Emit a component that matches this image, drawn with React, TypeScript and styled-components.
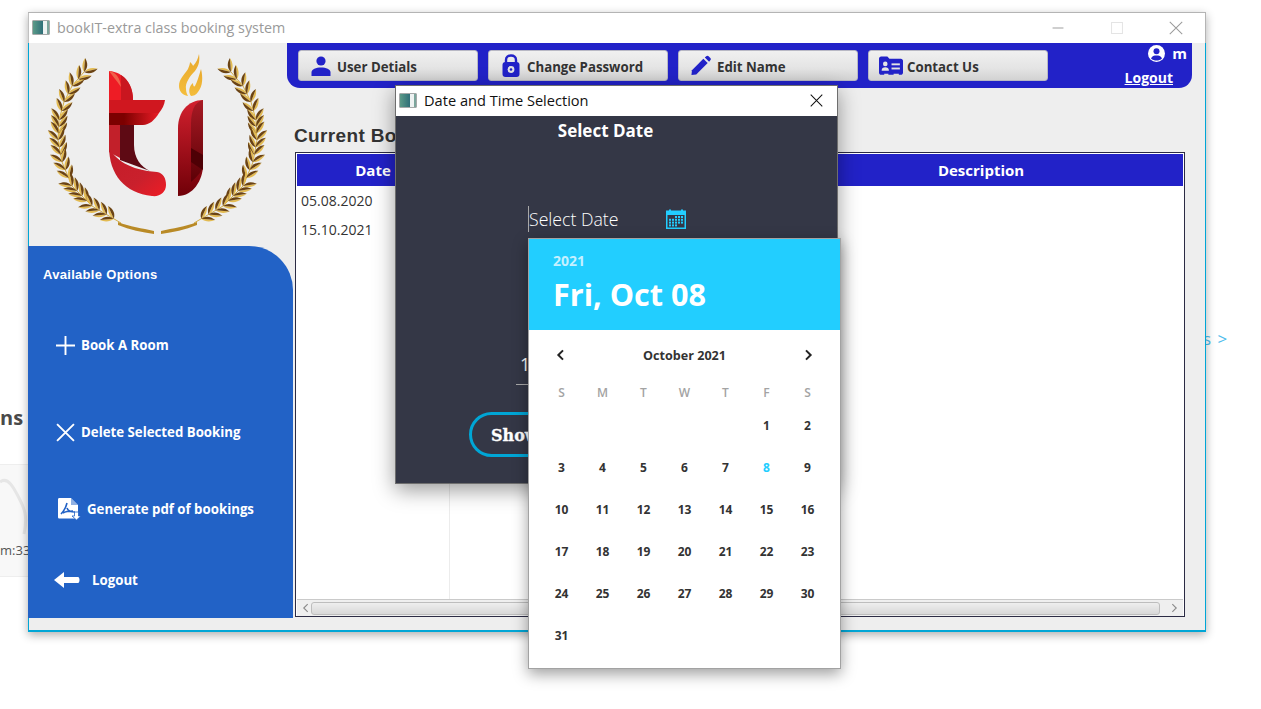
import React from 'react';
import styled, { createGlobalStyle } from 'styled-components';

const UI_FONT = `"Open Sans", "Noto Sans", sans-serif`;

const GlobalStyle = createGlobalStyle`
    html, body {
        margin: 0;
        background: #fff;
        overflow: hidden;
    }
    * {
        box-sizing: border-box;
    }
`;

const Desktop = styled.div`
    position: relative;
    width: 1261px;
    height: 709px;
    overflow: hidden;
    background: #fff;
    font-family: ${UI_FONT};
`;

/* bits of the browser page that is left behind the app window */
const PageHeadingScrap = styled.div`
    position: absolute;
    left: 0;
    top: 403px;
    font-size: 20px;
    font-weight: 700;
    line-height: 30px;
    color: #4a4a4a;
`;

const PageCardScrap = styled.div`
    position: absolute;
    left: -10px;
    top: 464px;
    width: 40px;
    height: 113px;
    background: #f8f8f8;
    border: 1px solid #eeeeee;
    overflow: hidden;
`;

const PageCardText = styled.div`
    position: absolute;
    left: 9px;
    top: 75px;
    font-size: 13px;
    line-height: 20px;
    color: #555;
`;

const PageCardSketch = styled.svg`
    position: absolute;
    left: 9px;
    top: 5px;
`;

const PageLinkScrap = styled.div`
    position: absolute;
    left: 1203px;
    top: 328px;
    font-size: 17px;
    line-height: 22px;
    letter-spacing: 1px;
    color: #4dbcec;
`;

const MainWindow = styled.div`
    position: absolute;
    left: 28px;
    top: 12px;
    width: 1178px;
    height: 620px;
    display: flex;
    flex-direction: column;
    border-top: 1px solid #b4b4b4;
    box-shadow: 0 3px 9px rgba(0, 0, 0, 0.32);
`;

const TitleBar = styled.div`
    height: 30px;
    flex: none;
    display: flex;
    align-items: center;
    background: #fff;
    border-left: 1px solid #c0c0c0;
    border-right: 1px solid #b4b4b4;
    padding-left: 3px;
    padding-bottom: 1px;
`;

const AppIcon = styled.span`
    width: 18px;
    height: 15px;
    flex: none;
    border: 1px solid #a4a8a8;
    border-radius: 1px;
    background: linear-gradient(90deg, #5b9a88 0%, #2f6f78 62%, #eef2f2 62%, #eef2f2 88%, #7ba59c 88%);
`;

const WindowTitle = styled.span<{ $dark?: boolean }>`
    margin-left: 7px;
    font-size: ${(p) => (p.$dark ? 14.6 : 14.3)}px;
    color: ${(p) => (p.$dark ? '#111' : '#9a9a9a')};
    flex: 1;
`;

const WindowControls = styled.div`
    display: flex;
    align-items: center;
`;

const ControlButton = styled.span`
    width: 59px;
    height: 29px;
    display: flex;
    align-items: center;
    justify-content: center;
`;

const DialogClose = styled(ControlButton)`
    width: 42px;
`;

const WindowBody = styled.div`
    flex: 1;
    min-height: 0;
    display: flex;
    background: #eeeeee;
    border: 1px solid #00a6d6;
    border-top: 0;
    border-bottom-width: 2px;
`;

const LeftColumn = styled.div`
    width: 265px;
    flex: none;
    display: flex;
    flex-direction: column;
    margin-left: -1px;
    padding-bottom: 12px;
`;

const LogoWrap = styled.div`
    height: 203px;
    flex: none;
`;

const Sidebar = styled.nav`
    flex: 1;
    background: #2262c6;
    border-top-right-radius: 44px;
    padding-top: 21px;
    color: #fff;
`;

const SidebarTitle = styled.div`
    font-family: "Liberation Sans", Arial, sans-serif;
    font-size: 13px;
    font-weight: 700;
    line-height: 16px;
    letter-spacing: 0.3px;
    margin-left: 15px;
    margin-bottom: 50px;
`;

const SideItem = styled.div<{ $pad: number; $gap: number; $after: number }>`
    height: 24px;
    display: flex;
    align-items: center;
    padding-left: ${(p) => p.$pad}px;
    gap: ${(p) => p.$gap}px;
    margin-bottom: ${(p) => p.$after}px;
    font-size: 13.25px;
    font-weight: 700;
    white-space: nowrap;
`;

const RightColumn = styled.div`
    flex: 1;
    min-width: 0;
    display: flex;
    flex-direction: column;
    padding: 0 20px 13px 2px;
`;

const TopBar = styled.div`
    height: 45px;
    flex: none;
    margin-left: -8px;
    margin-right: -7px;
    padding: 7px 0 0 11px;
    display: flex;
    gap: 10px;
    position: relative;
    background: #2222c8;
    border-radius: 0 0 13px 13px;
`;

const ToolButton = styled.div`
    width: 180px;
    height: 31px;
    flex: none;
    display: flex;
    align-items: center;
    padding-left: 12px;
    gap: 6px;
    border: 1px solid #b8b8c4;
    border-radius: 3px;
    background: linear-gradient(180deg, #f0f0f0 0%, #e4e4e4 60%, #d2d2d2 100%);
    font-size: 13.25px;
    font-weight: 700;
    color: #333;
    white-space: nowrap;
    padding-top: 2px;
`;

const IconSlot = styled.span<{ $w: number }>`
    width: ${(p) => p.$w}px;
    flex: none;
    display: flex;
    justify-content: center;
    margin-top: -2px;
`;

const UserBox = styled.div`
    flex: 1;
    display: flex;
    flex-direction: column;
    align-items: flex-end;
    color: #fff;
    font-weight: 700;
    font-size: 14px;
    margin-top: -8px;
    padding-right: 5px;
`;

const UserRow = styled.div`
    display: flex;
    align-items: center;
    gap: 7px;
    height: 22px;
    font-size: 15px;
`;

const LogoutLink = styled.a`
    margin-top: 4px;
    margin-right: 14px;
    line-height: 20px;
    text-decoration: underline;
    color: #fff;
`;

const SectionTitle = styled.h2`
    margin: 37px 0 5px -1px;
    font-family: "Liberation Sans", Arial, sans-serif;
    font-size: 19px;
    line-height: 22px;
    letter-spacing: 0.35px;
    font-weight: 700;
    color: #333;
`;

const TableFrame = styled.div`
    flex: 1;
    min-height: 0;
    display: flex;
    flex-direction: column;
    background: #fff;
    border: 1px solid #2b2b44;
    padding: 1px 1px 0 1px;
`;

const Columns = styled.div`
    flex: 1;
    min-height: 0;
    display: grid;
    grid-template-columns: 153px 329px 1fr;
`;

const Column = styled.div`
    display: flex;
    flex-direction: column;
    border-right: 1px solid #ececec;

    &:last-child {
        border-right: 0;
    }
`;

const ColumnHeader = styled.div`
    height: 32px;
    flex: none;
    display: flex;
    align-items: center;
    justify-content: center;
    background: #2222c8;
    color: #fff;
    font-size: 15px;
    font-weight: 700;
`;

const Cell = styled.div`
    height: 29px;
    display: flex;
    align-items: center;
    padding-left: 4px;
    font-size: 14px;
    color: #333;
`;

const ScrollBar = styled.div`
    height: 17px;
    flex: none;
    display: flex;
    align-items: center;
    background: #efefef;
    border-top: 1px solid #cacaca;
    padding: 0 4px;
`;

const ScrollThumb = styled.div`
    flex: 1;
    height: 13px;
    margin: 0 9px 0 0;
    background: linear-gradient(180deg, #eeeeee, #d8d8d8);
    border: 1px solid #bdbdbd;
    border-radius: 3px;
`;

const Dialog = styled.div`
    position: absolute;
    left: 395px;
    top: 85px;
    width: 443px;
    height: 399px;
    display: flex;
    flex-direction: column;
    border: 1px solid #6e6e6e;
    box-shadow: 0 6px 20px rgba(0, 0, 0, 0.4);
`;

const DialogTitleBar = styled.div`
    height: 30px;
    flex: none;
    display: flex;
    align-items: center;
    padding: 0 0 2px 3px;
    background: #fff;
`;

const DialogBody = styled.div`
    flex: 1;
    display: flex;
    flex-direction: column;
    background: #343746;
    color: #fff;
    overflow: hidden;
`;

const DialogHeading = styled.div`
    height: 30px;
    text-align: center;
    font-size: 17px;
    font-weight: 700;
    line-height: 30px;
    margin-right: 22px;
`;

const DateField = styled.div`
    margin: 60px 0 0 132px;
    width: 158px;
    height: 26px;
    display: flex;
    align-items: center;
    justify-content: space-between;
    border-left: 1.5px solid #a8a8a8;
    font-size: 17.7px;
    font-weight: 300;
    color: #fff;
`;

const TimeField = styled.div`
    margin: 118px 0 0 120px;
    width: 200px;
    height: 35px;
    padding: 0 0 0 4px;
    border-bottom: 1px solid #a8a8a8;
    font-size: 18px;
    line-height: 28px;
    color: #fff;
`;

const ShowButton = styled.div`
    margin: 27px 0 0 73px;
    width: 296px;
    height: 45px;
    padding: 2px 0 0 19px;
    display: flex;
    align-items: center;
    border: 3px solid #00a6d6;
    border-radius: 23px;
    font-family: "DejaVu Serif", serif;
    font-size: 16px;
    font-weight: 700;
    -webkit-text-stroke: 0.3px #fff;
`;

const DatePopup = styled.div`
    position: absolute;
    left: 528px;
    top: 238px;
    width: 313px;
    height: 431px;
    display: flex;
    flex-direction: column;
    background: #fff;
    border: 1px solid #a2a2a2;
    box-shadow: 0 5px 14px rgba(0, 0, 0, 0.38);
`;

const PopupHeader = styled.div`
    height: 91px;
    flex: none;
    padding: 13px 0 0 24px;
    background: #22ceff;
    color: #fff;
`;

const PopupYear = styled.div`
    font-size: 14px;
    font-weight: 700;
    line-height: 18px;
    color: #c4f0ff;
`;

const PopupDate = styled.div`
    margin-top: 3px;
    font-size: 30.6px;
    font-weight: 700;
    line-height: 42px;
`;

const MonthRow = styled.div`
    height: 50px;
    flex: none;
    display: flex;
    align-items: center;
    justify-content: space-between;
    padding: 0 26px 0 26px;
    font-size: 12.6px;
    font-weight: 700;
    color: #333;
`;

const DayGrid = styled.div`
    display: grid;
    grid-template-columns: repeat(7, 41px);
    grid-auto-rows: 42px;
    padding-left: 12px;
`;

const WeekdayRow = styled(DayGrid)`
    grid-auto-rows: 24px;
`;

const Weekday = styled.span`
    display: flex;
    align-items: center;
    justify-content: center;
    font-size: 12px;
    font-weight: 600;
    color: #a3a3a3;
`;

const Day = styled.span<{ $today?: boolean }>`
    display: flex;
    align-items: center;
    justify-content: center;
    font-size: 12px;
    font-weight: 700;
    color: ${(p) => (p.$today ? '#22ceff' : '#333')};
`;

type Point = [number, number];

const SPINE: Point[] = [
    [84, 72], [72, 86], [64, 102], [59, 120], [58, 140], [62, 162], [72, 186], [92, 206], [121, 223],
];

// walks the spine polyline and returns evenly spaced points with their direction
const sampleSpine = (step: number) => {
    const out: { x: number; y: number; a: number }[] = [];
    for (let i = 0; i < SPINE.length - 1; i++) {
        const [x1, y1] = SPINE[i];
        const [x2, y2] = SPINE[i + 1];
        const len = Math.hypot(x2 - x1, y2 - y1);
        const count = Math.round(len / step);
        for (let k = 0; k < count; k++) {
            const t = k / count;
            out.push({
                x: x1 + (x2 - x1) * t,
                y: y1 + (y2 - y1) * t,
                a: (Math.atan2(y1 - y2, x1 - x2) * 180) / Math.PI,
            });
        }
    }
    return out;
};

const Leaf = ({ x, y, a }: { x: number; y: number; a: number }) => (
    <g transform={`translate(${x} ${y}) rotate(${a})`}>
        <path d="M0 0 C4 -2.800 9 -2.800 14 0 Z" fill="#e3bb52" />
        <path d="M0 0 C4 3.600 9 3.600 14 0 Z" fill="#6b4313" />
    </g>
);

const Branch = () => (
    <>
        <path d="M84 72 L72 86 L64 102 L59 120 L58 140 L62 162 L72 186 L92 206 L121 223" fill="none" stroke="#d4ae46" strokeWidth="1" />
        <path d="M118 222 C130 227 142 228 154 231 L154 234 C142 232 130 230 118 225 Z" fill="#b98a26" />
        {sampleSpine(8).map((p, i) => (
            <g key={i}>
                <Leaf x={p.x} y={p.y} a={p.a + 36} />
                <Leaf x={p.x} y={p.y} a={p.a - 36} />
            </g>
        ))}
    </>
);

const Logo = () => (
    <svg width="265" height="203" viewBox="28 43 265 203">
        <defs>
            <linearGradient id="tBand" x1="0" x2="1" y1="0" y2="0">
                <stop offset="0" stopColor="#7c0000" />
                <stop offset="0.3" stopColor="#7c0000" />
                <stop offset="1" stopColor="#e81c26" />
            </linearGradient>
            <linearGradient id="tFoot" x1="0" x2="1" y1="0" y2="1">
                <stop offset="0" stopColor="#c41c28" />
                <stop offset="0.6" stopColor="#c9202c" />
                <stop offset="1" stopColor="#ee1c25" />
            </linearGradient>
            <linearGradient id="iBody" x1="0" x2="0" y1="0" y2="1">
                <stop offset="0" stopColor="#d3202e" />
                <stop offset="1" stopColor="#700008" />
            </linearGradient>
            <linearGradient id="iSide" x1="0" x2="0" y1="0" y2="1">
                <stop offset="0" stopColor="#a81a24" />
                <stop offset="1" stopColor="#5c0006" />
            </linearGradient>
            <linearGradient id="flame" x1="0" x2="0" y1="0" y2="1">
                <stop offset="0" stopColor="#e8a92c" />
                <stop offset="1" stopColor="#f4bd3c" />
            </linearGradient>
        </defs>
        <Branch />
        <g transform="translate(315 0) scale(-1 1)">
            <Branch />
        </g>
        {/* t */}
        <path d="M109 71 C124 72 133 85 133 100 L109 100 Z" fill="#ee1c25" />
        <path d="M121 75 C129 80 133 89 133 100 L121 100 Z" fill="#c9161f" />
        <path d="M109 71 C116 72 120 78 121 87 C116 80 112 75 109 71 Z" fill="#f0604a" />
        <path d="M109 100 L165 100 C164.500 105 162 109 159 113 L109 113 Z" fill="#d0171f" />
        <path d="M109 113 L159 113 C155 120 149 125 143 125 L109 125 Z" fill="url(#tBand)" />
        <path d="M109 125 L120 125 L120 158 L109 152 Z" fill="#c2202a" />
        <path d="M120 125 L134 125 L134 145 C134 158 141 167 150 171 L120 160 Z" fill="#5e0a14" />
        <path d="M109 146 C114 160 130 170 157 172 C163 173 166 178 166 185 C166 192 160 197 152 196 C125 193 109 175 109 146 Z" fill="url(#tFoot)" />
        {/* i */}
        <path d="M203 100 C188 100 178 112 178 128 L178 196 C193 196 203 180 203 165 Z" fill="url(#iBody)" />
        <path d="M203 100 C194 102 191 112 191 124 L191 182 C198 176 203 170 203 165 Z" fill="url(#iSide)" />
        <path d="M191 148 L203 155 L203 170 L191 162 Z" fill="#4e0005" />
        {/* flame */}
        <path d="M199 54 C200 60 199 66 195 71 C190 76 185 83 186 89 C186 92 187 94 188 96 C182 95 179 91 179 86 C179 79 184 75 188 69 C189 66 190 64 190 62 C192 64 193 65 193 66 C196 63 198 59 199 54 Z" fill="url(#flame)" />
        <path d="M201 69 C203 77 203 86 198 92 C196 95 193 96 191 96 C188 92 189 86 193 83 C193 86 194 87 195 86 C197 82 199 76 201 69 Z" fill="url(#flame)" />
    </svg>
);

const UserIcon = () => (
    <svg width="20" height="20" viewBox="0 0 20 20" fill="#2222c8">
        <circle cx="10" cy="5" r="4.600" />
        <path d="M0.500 20 L0.500 16.500 C0.500 13 5 11.500 10 11.500 C15 11.500 19.500 13 19.500 16.500 L19.500 20 Z" />
    </svg>
);

const LockIcon = () => (
    <svg width="18" height="23" viewBox="0 0 18 23">
        <path d="M4 9 V6 C4 3 6 1.500 9 1.500 C12 1.500 14 3 14 6 V9" fill="none" stroke="#2222c8" strokeWidth="2.400" />
        <rect x="0.500" y="8" width="17" height="15" rx="3" fill="#2222c8" />
        <circle cx="9" cy="15.500" r="3.400" fill="#e4e4e4" />
        <circle cx="9" cy="15.500" r="1.300" fill="#2222c8" />
    </svg>
);

const PencilIcon = () => (
    <svg width="21" height="21" viewBox="0 0 21 21" fill="#2222c8">
        <path d="M0.500 20.500 L1 15.500 L13 3.500 L17.500 8 L5.500 20 Z" />
        <path d="M14.500 2 L16 0.700 C16.800 0 17.800 0 18.500 0.700 L20.300 2.500 C21 3.200 21 4.200 20.300 5 L19 6.500 Z" />
    </svg>
);

const ContactIcon = () => (
    <svg width="24" height="20" viewBox="0 0 23 19" style={{ margin: '0 -2px' }}>
        <path d="M2 0.500 H8 L10 2.500 H21 C22 2.500 23 3.500 23 4.500 V16 C23 17 22 18 21 18 H19 V17 H14 V18 H9 V17 H5 V18 H2 C1 18 0 17 0 16 V2.500 C0 1.500 1 0.500 2 0.500 Z" fill="#2222c8" />
        <circle cx="6" cy="7.500" r="2.200" fill="#e4e4e4" />
        <path d="M2.500 14 C2.500 11.500 4 10.800 6 10.800 C8 10.800 9.500 11.500 9.500 14 Z" fill="#e4e4e4" />
        <rect x="12" y="7" width="8" height="1.800" fill="#e4e4e4" />
        <rect x="12" y="11" width="8" height="1.800" fill="#e4e4e4" />
    </svg>
);

const AccountIcon = () => (
    <svg width="17" height="17" viewBox="0 0 17 17">
        <circle cx="8.500" cy="8.500" r="8.500" fill="#fff" />
        <circle cx="8.500" cy="6.300" r="3" fill="#2222c8" />
        <path d="M3 13.500 C4 11 6 10.500 8.500 10.500 C11 10.500 13 11 14 13.500 C12.500 15 10.500 15.500 8.500 15.500 C6.500 15.500 4.500 15 3 13.500 Z" fill="#2222c8" />
    </svg>
);

const LineIcon = ({ d, color, size, width }: { d: string; color: string; size: number; width: number }) => (
    <svg width={size} height={size} viewBox="0 0 18 18" fill="none" stroke={color} strokeWidth={width}>
        <path d={d} />
    </svg>
);

const PdfIcon = () => (
    <svg width="23" height="22" viewBox="0 0 23 22">
        <path d="M1.500 0 H13 L20 7 V19 C20 20 19 20.500 18 20.500 H1.500 C0.500 20.500 0 20 0 19 V1.500 C0 0.500 0.500 0 1.500 0 Z" fill="#fff" />
        <path d="M13 0 V7 H20 Z" fill="#2262c6" opacity="0.5" />
        <path d="M9 5 C8 9 7 12 3 16 M9 10 C10 13 13 14 17 14 M5 15 C8 13 12 13 15 13" stroke="#2262c6" strokeWidth="1.600" fill="none" />
        <path d="M16.500 14 H20.500 V18 H23 L18.500 22 L14 18 H16.500 Z" fill="#fff" stroke="#2262c6" strokeWidth="0.800" />
    </svg>
);

const BackArrow = () => (
    <svg width="26" height="16" viewBox="0 0 26 16" fill="#fff">
        <path d="M0 8 L10 0 V5 H24 C26 5 26 11 24 11 H10 V16 Z" />
    </svg>
);

const CalendarIcon = () => (
    <svg width="20" height="20" viewBox="0 0 20 20">
        <path d="M0 1.500 H3 V0.500 H5 V1.500 H15 V0.500 H17 V1.500 H20 V20 H0 Z" fill="#22ceff" />
        <rect x="1.500" y="6" width="17" height="12.500" fill="#343746" />
        {[0, 1, 2, 3].map((r) =>
            [0, 1, 2, 3, 4].map((c) =>
                (r === 0 && c < 2) || (r === 3 && c > 2) ? null : (
                    <rect key={`${r}-${c}`} x={3 + c * 3} y={7 + r * 2.800} width="2" height="2" fill="#22ceff" />
                ),
            ),
        )}
    </svg>
);

const WEEKDAYS = ['S', 'M', 'T', 'W', 'T', 'F', 'S'];
const LEADING_BLANKS = 5; // October 2021 starts on a Friday
const DAYS = Array.from({ length: 31 }, (_, i) => i + 1);

const App = () => (
    <Desktop>
        <GlobalStyle />
        <PageHeadingScrap>ns</PageHeadingScrap>
        <PageCardScrap>
            <PageCardSketch width="30" height="70" viewBox="0 0 30 70" fill="none" stroke="#e6e6e6" strokeWidth="3">
                <path d="M0 12 C8 6 14 18 20 30 C24 38 28 46 24 64" />
            </PageCardSketch>
            <PageCardText>m:33</PageCardText>
        </PageCardScrap>
        <PageLinkScrap>s &gt;</PageLinkScrap>

        <MainWindow>
            <TitleBar>
                <AppIcon />
                <WindowTitle>bookIT-extra class booking system</WindowTitle>
                <WindowControls>
                    <ControlButton>
                        <LineIcon d="M2 9 H16" color="#a0a0a0" size={14} width={1.3} />
                    </ControlButton>
                    <ControlButton>
                        <LineIcon d="M2 2 H16 V16 H2 Z" color="#e4e4e4" size={14} width={1.3} />
                    </ControlButton>
                    <ControlButton>
                        <LineIcon d="M1 1 L17 17 M17 1 L1 17" color="#9a9a9a" size={14} width={1.3} />
                    </ControlButton>
                </WindowControls>
            </TitleBar>
            <WindowBody>
                <LeftColumn>
                    <LogoWrap>
                        <Logo />
                    </LogoWrap>
                    <Sidebar>
                        <SidebarTitle>Available Options</SidebarTitle>
                        <SideItem $pad={28} $gap={6} $after={63}>
                            <LineIcon d="M9 0 V18 M0 9 H18" color="#fff" size={19} width={1.8} />
                            Book A Room
                        </SideItem>
                        <SideItem $pad={28} $gap={6} $after={53}>
                            <LineIcon d="M1 1 L17 17 M17 1 L1 17" color="#fff" size={19} width={1.8} />
                            Delete Selected Booking
                        </SideItem>
                        <SideItem $pad={30} $gap={6} $after={47}>
                            <PdfIcon />
                            Generate pdf of bookings
                        </SideItem>
                        <SideItem $pad={26} $gap={12} $after={0}>
                            <BackArrow />
                            Logout
                        </SideItem>
                    </Sidebar>
                </LeftColumn>
                <RightColumn>
                    <TopBar>
                        <ToolButton>
                            <IconSlot $w={20}><UserIcon /></IconSlot>
                            User Detials
                        </ToolButton>
                        <ToolButton>
                            <IconSlot $w={20}><LockIcon /></IconSlot>
                            Change Password
                        </ToolButton>
                        <ToolButton>
                            <IconSlot $w={20}><PencilIcon /></IconSlot>
                            Edit Name
                        </ToolButton>
                        <ToolButton>
                            <IconSlot $w={20}><ContactIcon /></IconSlot>
                            Contact Us
                        </ToolButton>
                        <UserBox>
                            <UserRow>
                                <AccountIcon />
                                m
                            </UserRow>
                            <LogoutLink>Logout</LogoutLink>
                        </UserBox>
                    </TopBar>
                    <SectionTitle>Current Bookings</SectionTitle>
                    <TableFrame>
                        <Columns>
                            <Column>
                                <ColumnHeader>Date</ColumnHeader>
                                <Cell>05.08.2020</Cell>
                                <Cell>15.10.2021</Cell>
                            </Column>
                            <Column>
                                <ColumnHeader />
                            </Column>
                            <Column>
                                <ColumnHeader>Description</ColumnHeader>
                            </Column>
                        </Columns>
                        <ScrollBar>
                            <LineIcon d="M12 2 L5 9 L12 16" color="#8a8a8a" size={10} width={2} />
                            <ScrollThumb />
                            <LineIcon d="M6 2 L13 9 L6 16" color="#8a8a8a" size={10} width={2} />
                        </ScrollBar>
                    </TableFrame>
                </RightColumn>
            </WindowBody>
        </MainWindow>

        <Dialog>
            <DialogTitleBar>
                <AppIcon />
                <WindowTitle $dark>Date and Time Selection</WindowTitle>
                <DialogClose>
                    <LineIcon d="M1 1 L17 17 M17 1 L1 17" color="#111" size={13} width={1.4} />
                </DialogClose>
            </DialogTitleBar>
            <DialogBody>
                <DialogHeading>Select Date</DialogHeading>
                <DateField>
                    Select Date
                    <CalendarIcon />
                </DateField>
                <TimeField>1</TimeField>
                <ShowButton>Show</ShowButton>
            </DialogBody>
        </Dialog>

        <DatePopup>
            <PopupHeader>
                <PopupYear>2021</PopupYear>
                <PopupDate>Fri, Oct 08</PopupDate>
            </PopupHeader>
            <MonthRow>
                <LineIcon d="M12 2 L5 9 L12 16" color="#222" size={12} width={3} />
                October 2021
                <LineIcon d="M6 2 L13 9 L6 16" color="#222" size={12} width={3} />
            </MonthRow>
            <WeekdayRow>
                {WEEKDAYS.map((d, i) => (
                    <Weekday key={i}>{d}</Weekday>
                ))}
            </WeekdayRow>
            <DayGrid>
                {Array.from({ length: LEADING_BLANKS }, (_, i) => (
                    <span key={`blank-${i}`} />
                ))}
                {DAYS.map((d) => (
                    <Day key={d} $today={d === 8}>{d}</Day>
                ))}
            </DayGrid>
        </DatePopup>
    </Desktop>
);

export default App;
